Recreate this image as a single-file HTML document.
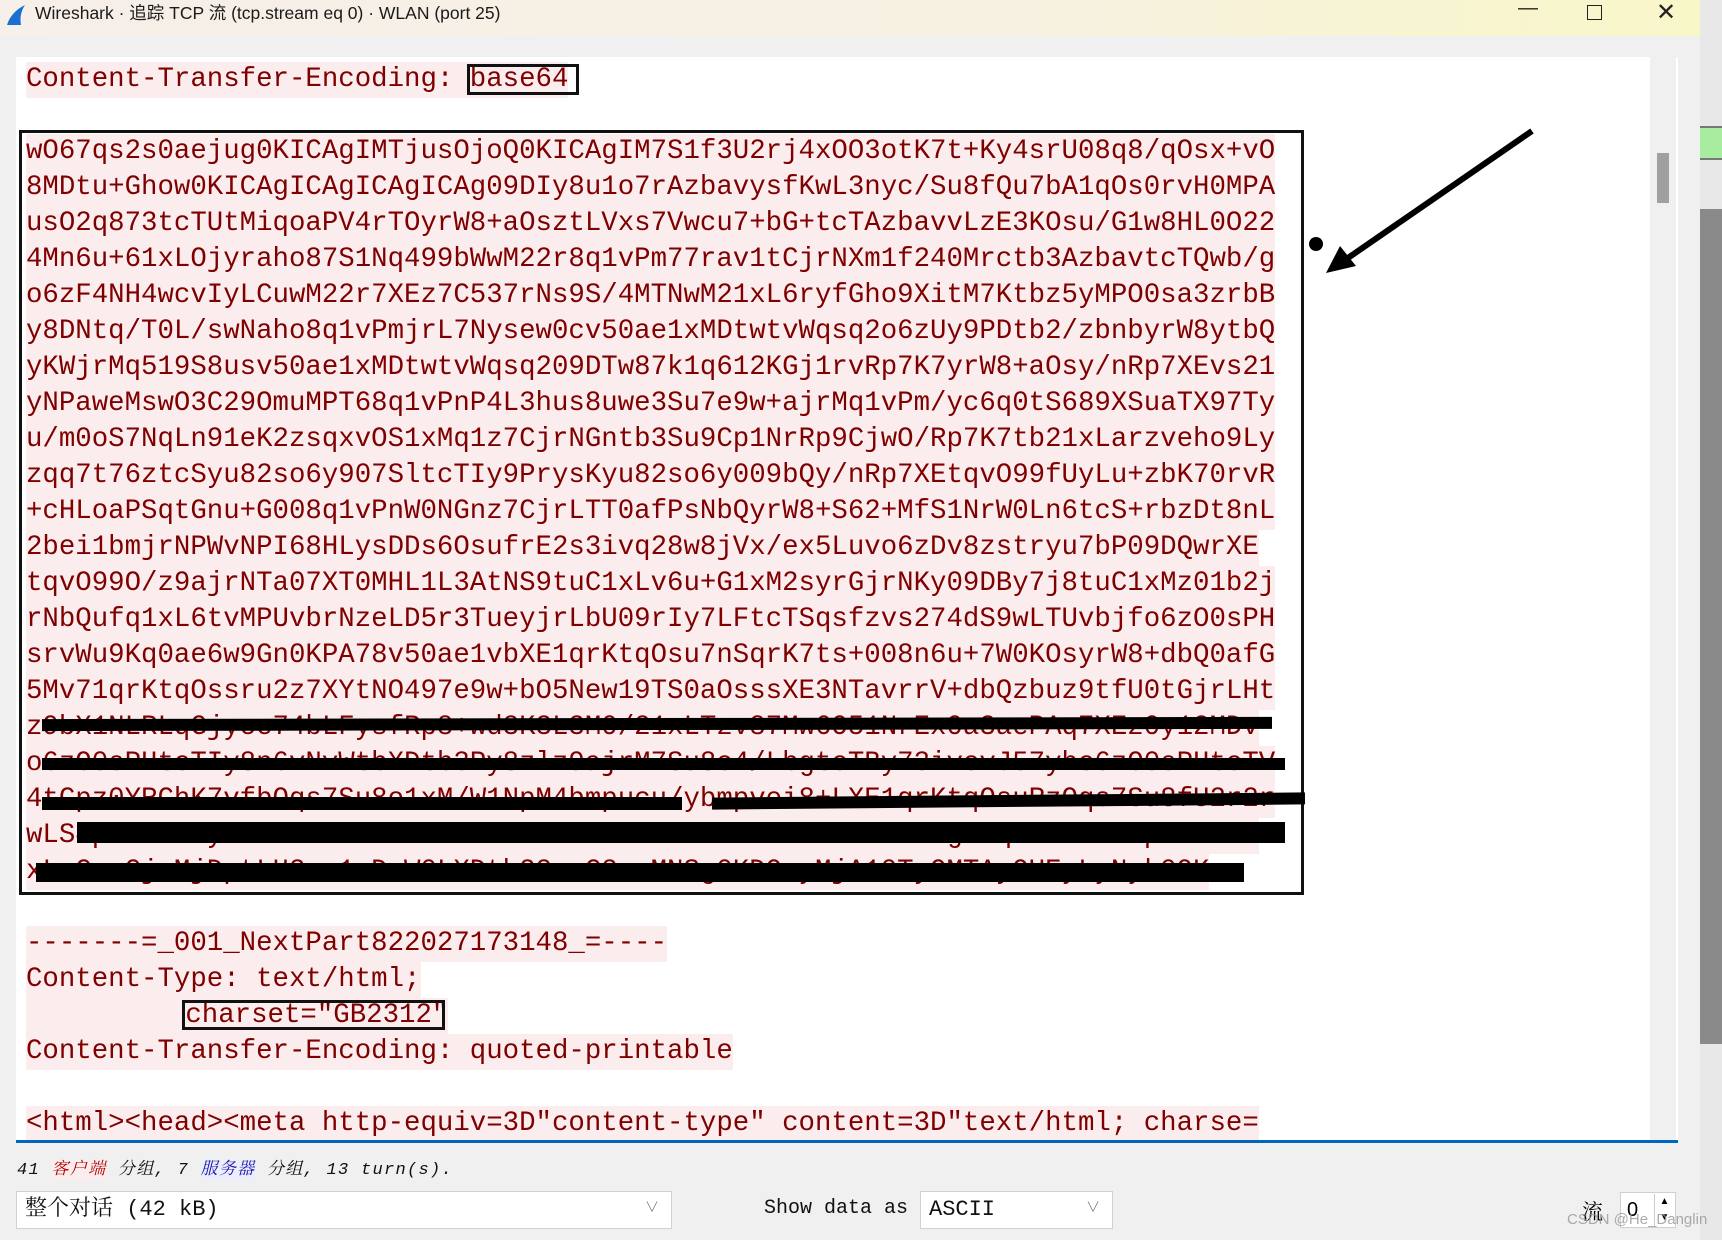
<!DOCTYPE html>
<html><head><meta charset="utf-8">
<style>
*{margin:0;padding:0;box-sizing:border-box}
html,body{width:1722px;height:1240px;overflow:hidden;background:#f0f0f0;position:relative;font-family:"Liberation Sans","Noto Sans CJK SC",sans-serif}
.title{position:absolute;left:0;top:0;width:1700px;height:36px;background:linear-gradient(90deg,#f6efea 0%,#f6f0e0 60%,#f8f7c8 100%)}
.title .t{position:absolute;left:35px;top:0px;font-size:17.5px;color:#1a1a1a}
.ctl{position:absolute;top:2px;font-size:20px;color:#222}
.text{position:absolute;left:16px;top:57px;width:1662px;height:1084px;background:#fff;overflow:hidden}
.ln{position:absolute;left:10px;height:36px;line-height:36px;font-family:"Liberation Mono",monospace;font-size:27.4px;color:#7f0000;white-space:pre;background:#fbeded;margin-top:3px}
.sb{position:absolute;left:1634px;top:0;width:26px;height:1084px;background:#f0f0f0}
.sb div{position:absolute;left:7px;top:96px;width:12px;height:50px;background:#a0a0a0}
.rs{position:absolute;background:#000}
.blue{position:absolute;left:16px;top:1140px;width:1662px;height:3px;background:#0067c0}
.stat{position:absolute;left:17px;top:1154px;font-family:"Liberation Mono","Noto Serif CJK SC",monospace;font-style:italic;font-size:17px;letter-spacing:1.3px;color:#111}
.cb{position:absolute;background:#fff;border:1px solid #d0d0d0;font-family:"Liberation Mono","Noto Serif CJK SC",monospace;font-size:22px;line-height:35px;padding-left:8px;color:#111}
.cb .ar{position:absolute;right:12px;top:0;font-size:14px;color:#555}
</style></head><body>
<div class="title"><svg style="position:absolute;left:5px;top:4px" width="24" height="22"><path d="M2 21 Q6 8 20 1 Q14 10 16 21 Z" fill="#1a6fd0"/></svg><span class="t">Wireshark · 追踪 TCP 流 (tcp.stream eq 0) · WLAN (port 25)</span>
<span class="ctl" style="left:1518px;top:-3px">—</span>
<span style="position:absolute;left:1587px;top:5px;width:15px;height:15px;border:1.6px solid #222"></span>
<span class="ctl" style="left:1656px;top:-2px;font-size:24px">✕</span></div>
<div style="position:absolute;left:1700px;top:0;width:22px;height:1240px;background:#e8e8e8"></div>
<div style="position:absolute;left:1700px;top:126px;width:22px;height:34px;background:#a8eca0;border-top:2px solid #777;border-bottom:2px solid #777"></div>
<div style="position:absolute;left:1700px;top:209px;width:22px;height:835px;background:#8a8a8a"></div>
<div class="text">
<div class="ln" style="top:2px">Content-Transfer-Encoding: base64</div>
<div class="ln" style="top:74px">wO67qs2s0aejug0KICAgIMTjusOjoQ0KICAgIM7S1f3U2rj4xOO3otK7t+Ky4srU08q8/qOsx+vO</div>
<div class="ln" style="top:110px">8MDtu+Ghow0KICAgICAgICAgICAg09DIy8u1o7rAzbavysfKwL3nyc/Su8fQu7bA1qOs0rvH0MPA</div>
<div class="ln" style="top:146px">usO2q873tcTUtMiqoaPV4rTOyrW8+aOsztLVxs7Vwcu7+bG+tcTAzbavvLzE3KOsu/G1w8HL0O22</div>
<div class="ln" style="top:182px">4Mn6u+61xLOjyraho87S1Nq499bWwM22r8q1vPm77rav1tCjrNXm1f240Mrctb3AzbavtcTQwb/g</div>
<div class="ln" style="top:218px">o6zF4NH4wcvIyLCuwM22r7XEz7C537rNs9S/4MTNwM21xL6ryfGho9XitM7Ktbz5yMPO0sa3zrbB</div>
<div class="ln" style="top:254px">y8DNtq/T0L/swNaho8q1vPmjrL7Nysew0cv50ae1xMDtwtvWqsq2o6zUy9PDtb2/zbnbyrW8ytbQ</div>
<div class="ln" style="top:290px">yKWjrMq519S8usv50ae1xMDtwtvWqsq209DTw87k1q612KGj1rvRp7K7yrW8+aOsy/nRp7XEvs21</div>
<div class="ln" style="top:326px">yNPaweMswO3C29OmuMPT68q1vPnP4L3hus8uwe3Su7e9w+ajrMq1vPm/yc6q0tS689XSuaTX97Ty</div>
<div class="ln" style="top:362px">u/m0oS7NqLn91eK2zsqxvOS1xMq1z7CjrNGntb3Su9Cp1NrRp9CjwO/Rp7K7tb21xLarzveho9Ly</div>
<div class="ln" style="top:398px">zqq7t76ztcSyu82so6y907SltcTIy9PrysKyu82so6y009bQy/nRp7XEtqvO99fUyLu+zbK70rvR</div>
<div class="ln" style="top:434px">+cHLoaPSqtGnu+G008q1vPnW0NGnz7CjrLTT0afPsNbQyrW8+S62+MfS1NrW0Ln6tcS+rbzDt8nL</div>
<div class="ln" style="top:470px">2bei1bmjrNPWvNPI68HLysDDs6OsufrE2s3ivq28w8jVx/ex5Luvo6zDv8zstryu7bP09DQwrXE</div>
<div class="ln" style="top:506px">tqvO99O/z9ajrNTa07XT0MHL1L3AtNS9tuC1xLv6u+G1xM2syrGjrNKy09DBy7j8tuC1xMz01b2j</div>
<div class="ln" style="top:542px">rNbQufq1xL6tvMPUvbrNzeLD5r3TueyjrLbU09rIy7LFtcTSqsfzvs274dS9wLTUvbjfo6zO0sPH</div>
<div class="ln" style="top:578px">srvWu9Kq0ae6w9Gn0KPA78v50ae1vbXE1qrKtqOsu7nSqrK7ts+008n6u+7W0KOsyrW8+dbQ0afG</div>
<div class="ln" style="top:614px">5Mv71qrKtqOssru2z7XYtNO497e9w+bO5New19TS0aOsssXE3NTavrrV+dbQzbuz9tfU0tGjrLHt</div>
<div class="ln" style="top:650px">z9bX1NLRLqGjyce74bLFysfRp8+wd3K3L3M0/21xLTzv87Mw6O51NrEx0a3aePAq7XEz0y12MDv</div>
<div class="ln" style="top:686px">o6zO0sPHtcTIy8n6vNvWtbXDtb3Py8zlz9ajrM7Su8o4/LbgtcTBy73ivcvJ57yhc6zO0sPHtcTV</div>
<div class="ln" style="top:722px">4tCpz0YRChK7vfbOqs7Su8o1xM/W1NpM4bmpucu/ybmpvei8+LXE1qrKtqOsuRzOqs7Su8fU2r2r</div>
<div class="ln" style="top:758px">wLS4pMTL1zYytLoMrMtTs3uutJMbW9t0Su3Sh1X1zNbM0tcXm7Cud9z0g7bqbcxl1Y1Sp8aMvVK</div>
<div class="ln" style="top:794px">xLvGuvGjrMjDptLH2sa1vDrW0LXDtb22zzC2ssMNSg0KDOzyMjA10TyOMTAyOUEyLyNyk09K</div>
<div class="ln" style="top:866px">-------=_001_NextPart822027173148_=----</div>
<div class="ln" style="top:902px">Content-Type: text/html;</div>
<div class="ln" style="top:938px;text-indent:-5px">          charset="GB2312"</div>
<div class="ln" style="top:974px">Content-Transfer-Encoding: quoted-printable</div>
<div class="ln" style="top:1046px">&lt;html&gt;&lt;head&gt;&lt;meta http-equiv=3D"content-type" content=3D"text/html; charse=</div>
<div class="sb"><div></div></div>
</div>
<!-- boxes -->
<div style="position:absolute;left:19px;top:130px;width:1285px;height:765px;border:3px solid #111"></div>
<div style="position:absolute;left:467px;top:64px;width:112px;height:31px;border:3px solid #111"></div>
<div style="position:absolute;left:182px;top:1000px;width:263px;height:30px;border:3px solid #111"></div>
<!-- redactions -->
<div class="rs" style="left:42px;top:718px;width:1230px;height:12px;transform:rotate(-0.1deg)"></div>
<div class="rs" style="left:42px;top:758px;width:1243px;height:12px"></div>
<div class="rs" style="left:42px;top:797px;width:640px;height:13px"></div>
<div class="rs" style="left:712px;top:795px;width:593px;height:12px;transform:rotate(-0.5deg)"></div>
<div class="rs" style="left:77px;top:822px;width:1208px;height:21px"></div>
<div class="rs" style="left:36px;top:863px;width:1208px;height:19px"></div>
<!-- arrow -->
<svg style="position:absolute;left:0;top:0" width="1722" height="1240">
<circle cx="1316" cy="244" r="7" fill="#000"/>
<line x1="1532" y1="131" x2="1345" y2="260" stroke="#000" stroke-width="6"/>
<polygon points="1326,273 1340,246 1356,266" fill="#000"/>
</svg>
<div class="blue"></div>
<div class="stat">41 <span style="color:#b00000;background:#fbeded">客户端</span> 分组, 7 <span style="color:#1a1ab0;background:#ededfb">服务器</span> 分组, 13 turn(s).</div>
<div class="cb" style="left:16px;top:1191px;width:656px;height:38px">整个对话 (42 kB)<span class="ar">∨</span></div>
<div style="position:absolute;left:764px;top:1197px;font-family:'Liberation Mono',monospace;font-size:20px;color:#111">Show data as</div>
<div class="cb" style="left:920px;top:1191px;width:193px;height:38px">ASCII<span class="ar">∨</span></div>
<div style="position:absolute;left:1582px;top:1196px;font-size:21px;font-family:'Noto Serif CJK SC',serif">流</div>
<div style="position:absolute;left:1620px;top:1192px;width:56px;height:36px;background:#fff;border:1px solid #d0d0d0;font-size:20px;padding-left:6px;line-height:34px">0</div>
<div style="position:absolute;left:1654px;top:1194px;width:20px;height:32px;border-left:1px solid #ccc;font-size:10px;text-align:center;line-height:16px">▲<br>▼</div>
<div style="position:absolute;left:1567px;top:1211px;font-size:15px;color:rgba(150,150,150,0.8)">CSDN @He_Danglin</div>
</body></html>
